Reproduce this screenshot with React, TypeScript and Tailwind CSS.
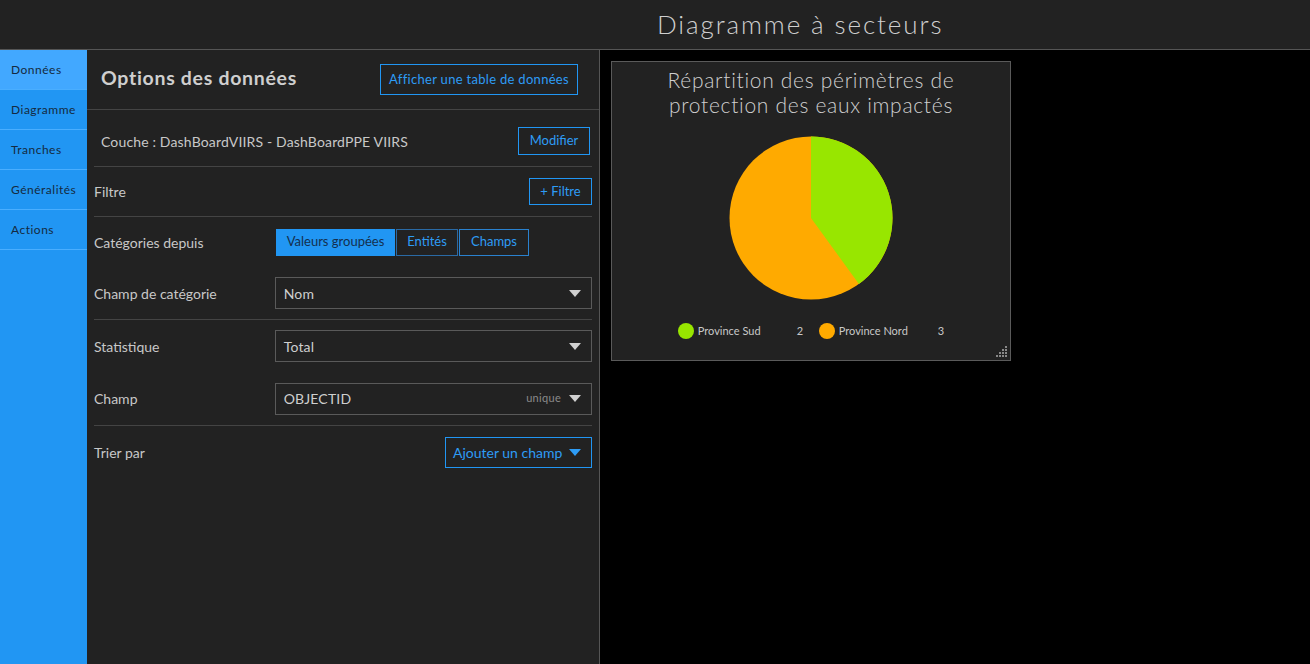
import React from "react";

const font = { fontFamily: "Lato, 'Noto Sans', sans-serif" };

function Caret({ color = "#d0d0d0" }: { color?: string }) {
  return (
    <svg width="12" height="7" viewBox="0 0 12 7">
      <path d="M0 0 L12 0 L6 7 Z" fill={color} />
    </svg>
  );
}

function Select({ value, extra }: { value: string; extra?: string }) {
  return (
    <div className="flex h-[32px] w-[318px] items-center border border-[#5a5a5a] pl-[8px] pr-[10px]">
      <span className="flex-1 text-[14px] tracking-[0.2px] text-[#cfcfcf]">{value}</span>
      {extra && <span className="mr-[8px] text-[11px] tracking-[0.3px] text-[#8a8a8a]">{extra}</span>}
      <Caret />
    </div>
  );
}

function Pie() {
  const cx = 82;
  const cy = 82;
  const r = 81.5;
  const a = (144 * Math.PI) / 180;
  const ex = cx + r * Math.sin(a);
  const ey = cy - r * Math.cos(a);
  return (
    <svg width="164" height="164" viewBox="0 0 164 164">
      <circle cx={cx} cy={cy} r={r} fill="#ffaa00" />
      <path d={`M${cx} ${cy} L${cx} ${cy - r} A${r} ${r} 0 0 1 ${ex} ${ey} Z`} fill="#98e600" />
    </svg>
  );
}

export default function App() {
  const nav = ["Données", "Diagramme", "Tranches", "Généralités", "Actions"];
  return (
    <div className="flex h-[664px] w-[1310px] flex-col overflow-hidden bg-black" style={font}>
      <header className="flex h-[50px] shrink-0 items-center border-b border-[#555] bg-[#222] pl-[657px]">
        <span className="text-[26px] font-light tracking-[1.9px] text-[#cfcfcf]">Diagramme à secteurs</span>
      </header>
      <div className="flex flex-1">
        <nav className="w-[87px] shrink-0 bg-[#2196f3]">
          {nav.map((n, i) => (
            <div
              key={n}
              className={`flex h-[40px] items-center border-b border-[#4aaeff] pl-[11px] text-[12px] tracking-[0.5px] text-[#152a40] ${i === 0 ? "bg-[#42a8ff]" : ""}`}
            >
              {n}
            </div>
          ))}
        </nav>
        <section className="w-[513px] shrink-0 border-r border-[#555] bg-[#222]">
          <div className="flex h-[60px] items-center justify-between border-b border-[#444] pl-[14px] pr-[21px]">
            <span className="mb-[3px] text-[19.5px] font-bold tracking-[0.7px] text-[#cfcfcf]">Options des données</span>
            <button className="h-[31px] w-[198px] border border-[#2196f3] text-[13px] tracking-[0.3px] text-[#2e9cf5]">
              Afficher une table de données
            </button>
          </div>
          <div className="mx-[7px]">
            <div className="flex h-[57px] items-center justify-between border-b border-[#444] pl-[7px] pr-[2px] pt-[6px]">
              <span className="text-[14px] tracking-[0.15px] text-[#c8c8c8]">Couche : DashBoardVIIRS - DashBoardPPE VIIRS</span>
              <button className="h-[28px] w-[72px] border border-[#2196f3] text-[13px] text-[#2e9cf5]">Modifier</button>
            </div>
            <div className="flex h-[50px] items-center justify-between border-b border-[#444]">
              <span className="text-[14px] text-[#c8c8c8]">Filtre</span>
              <button className="h-[27px] w-[63px] border border-[#2196f3] text-[13px] text-[#2e9cf5]">+ Filtre</button>
            </div>
            <div className="border-b border-[#444]">
              <div className="flex h-[50px] items-center">
                <span className="w-[182px] text-[14px] text-[#c8c8c8]">Catégories depuis</span>
                <div className="flex gap-[1px]">
                  <button className="h-[27px] w-[119px] bg-[#2196f3] text-[13px] text-[#14304f]">Valeurs groupées</button>
                  <button className="h-[27px] w-[62px] border border-[#2a6aa5] text-[13px] text-[#2e9cf5]">Entités</button>
                  <button className="h-[27px] w-[70px] border border-[#2a82cf] text-[13px] text-[#2e9cf5]">Champs</button>
                </div>
              </div>
              <div className="flex h-[52px] items-center">
                <span className="w-[181px] text-[14px] text-[#c8c8c8]">Champ de catégorie</span>
                <Select value="Nom" />
              </div>
            </div>
            <div className="border-b border-[#444]">
              <div className="flex h-[52px] items-center">
                <span className="w-[181px] text-[14px] text-[#c8c8c8]">Statistique</span>
                <Select value="Total" />
              </div>
              <div className="flex h-[53px] items-center">
                <span className="w-[181px] text-[14px] text-[#c8c8c8]">Champ</span>
                <Select value="OBJECTID" extra="unique" />
              </div>
            </div>
            <div className="flex h-[53px] items-center justify-between">
              <span className="text-[14px] text-[#c8c8c8]">Trier par</span>
              <button className="flex h-[31px] w-[147px] items-center justify-between border border-[#2196f3] pl-[7px] pr-[10px] text-[14px] text-[#2e9cf5]">
                <span>Ajouter un champ</span>
                <Caret color="#2e9cf5" />
              </button>
            </div>
          </div>
        </section>
        <main className="flex-1 pl-[11px] pt-[11px]">
          <div className="relative flex h-[300px] w-[400px] flex-col items-center border border-[#5a5a5a] bg-[#222]">
            <div className="mt-[5px] text-center text-[21px] font-light leading-[25px] tracking-[0.7px] text-[#cfcfcf]">
              Répartition des périmètres de
              <br />
              protection des eaux impactés
            </div>
            <div className="mt-[19px]">
              <Pie />
            </div>
            <div className="mt-[23px] flex items-center text-[11px] text-[#c8c8c8]">
              <span className="h-[16px] w-[16px] rounded-full bg-[#98e600]" />
              <span className="ml-[4px] w-[99px]">Province Sud</span>
              <span className="w-[22px]">2</span>
              <span className="h-[16px] w-[16px] rounded-full bg-[#ffaa00]" />
              <span className="ml-[4px] w-[99px]">Province Nord</span>
              <span>3</span>
            </div>
            <svg className="absolute bottom-[2px] right-[2px]" width="12" height="12" viewBox="0 0 12 12">
              {[
                [9, 0], [6, 3], [9, 3], [3, 6], [6, 6], [9, 6], [0, 9], [3, 9], [6, 9], [9, 9],
              ].map(([x, y], i) => (
                <rect key={i} x={x} y={y} width="2" height="2" fill="#888" />
              ))}
            </svg>
          </div>
        </main>
      </div>
    </div>
  );
}
